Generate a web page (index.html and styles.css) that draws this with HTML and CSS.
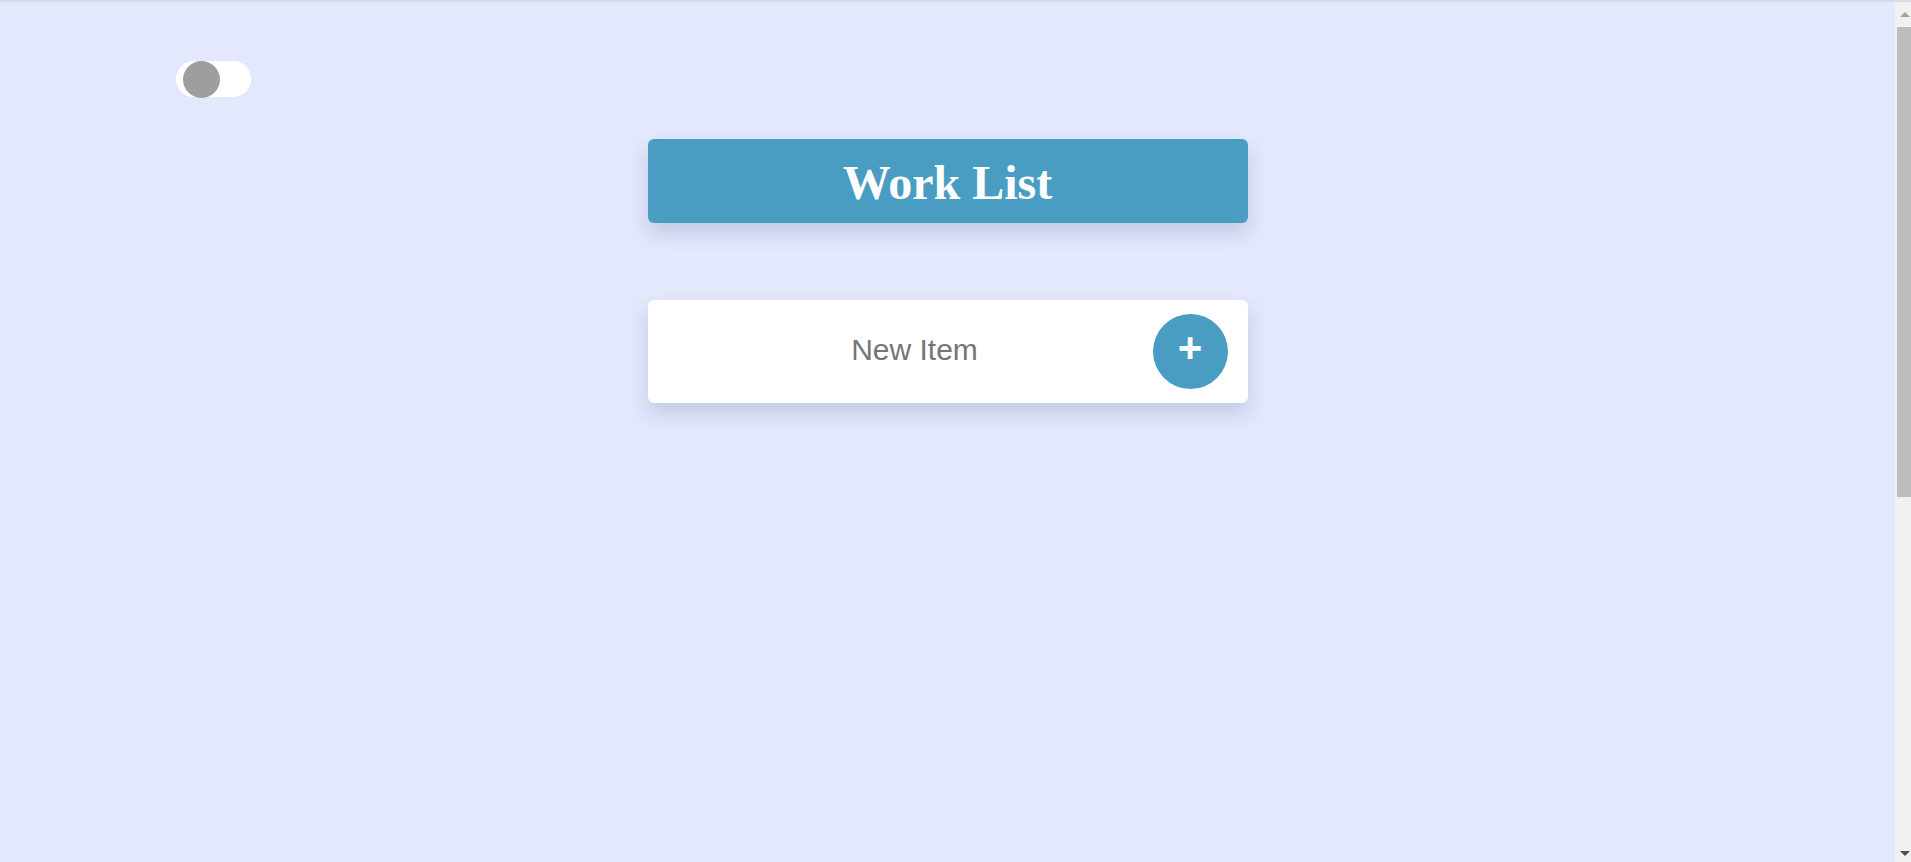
FILE: index.html
```html
<!DOCTYPE html>
<html lang="en">
<head>
<meta charset="utf-8">
<title>Work List</title>
<link rel="stylesheet" href="styles.css">
</head>
<body>
<div class="window">
  <div class="page">
    <div class="toggle-row">
      <label class="toggle"><span class="knob"></span></label>
    </div>
    <main class="container">
      <header class="title-box"><h1 class="title">Work List</h1></header>
      <form class="entry">
        <input class="entry-input" type="text" placeholder="New Item">
        <button class="add-btn" type="button">+</button>
      </form>
    </main>
  </div>
  <div class="scrollbar" aria-hidden="true">
    <div class="sb-btn sb-up"><span class="arrow-up"></span></div>
    <div class="sb-thumb"></div>
    <div class="sb-track"></div>
    <div class="sb-btn sb-down"><span class="arrow-down"></span></div>
  </div>
</div>
</body>
</html>
```
FILE: styles.css
```css
html, body {
  margin: 0;
  padding: 0;
  height: 100%;
  overflow: hidden;
}
body {
  background: #e3e8fc;
  border-top: 2px solid #d8dbe7;
  box-sizing: border-box;
  font-family: "Liberation Sans", Arial, sans-serif;
}
.window {
  display: flex;
  height: 100%;
}
.page {
  flex: 1;
  min-width: 0;
}
.scrollbar {
  width: 16px;
  flex: none;
  background: #f1f1f1;
  display: flex;
  flex-direction: column;
}
.sb-btn {
  display: flex;
  justify-content: flex-end;
  padding-right: 1px;
}
.sb-up {
  height: 25px;
  align-items: flex-start;
  padding-top: 10px;
  box-sizing: border-box;
}
.sb-down {
  height: 17px;
  align-items: flex-start;
  padding-top: 6px;
  box-sizing: border-box;
}
.arrow-up {
  width: 0;
  height: 0;
  border-left: 5px solid transparent;
  border-right: 5px solid transparent;
  border-bottom: 5px solid #a3a3a3;
}
.arrow-down {
  width: 0;
  height: 0;
  border-left: 5px solid transparent;
  border-right: 5px solid transparent;
  border-top: 5px solid #505050;
}
.sb-thumb {
  height: 470px;
  margin-left: 2px;
  background: #bdbdbd;
}
.sb-track {
  flex: 1;
}
.toggle-row {
  padding: 59px 0 0 176px;
}
.toggle {
  display: block;
  position: relative;
  width: 75px;
  height: 36px;
  border-radius: 18px;
  background: #ffffff;
}
.knob {
  position: absolute;
  left: 7px;
  top: -0.5px;
  width: 37px;
  height: 37px;
  border-radius: 50%;
  background: #9e9e9e;
}
.container {
  display: flex;
  flex-direction: column;
  align-items: center;
  padding-top: 42px;
}
.title-box {
  width: 600px;
  height: 84px;
  background: #4a9dc2;
  border-radius: 6px;
  box-shadow: 0 10px 20px rgba(40, 50, 110, 0.17);
  display: flex;
  align-items: center;
  justify-content: center;
}
.title {
  margin: 0;
  font-family: "Liberation Serif", "Times New Roman", serif;
  font-weight: bold;
  font-size: 48px;
  color: #ffffff;
  line-height: 1;
  padding-top: 3px;
}
.entry {
  margin-top: 77px;
  width: 600px;
  height: 103px;
  box-sizing: border-box;
  background: #ffffff;
  border-radius: 6px;
  box-shadow: 0 10px 20px rgba(40, 50, 110, 0.17);
  display: flex;
  align-items: center;
  padding: 0 20px 0 20px;
}
.entry-input {
  flex: 1;
  min-width: 0;
  border: none;
  outline: none;
  background: transparent;
  font-family: "Liberation Sans", Arial, sans-serif;
  font-size: 30px;
  color: #333;
  text-align: center;
  padding: 0 0 0 9px;
  margin-bottom: 4px;
}
.entry-input::placeholder {
  color: #757575;
}
.add-btn {
  width: 75px;
  height: 75px;
  flex: none;
  border: none;
  border-radius: 50%;
  background: #4a9dc2;
  color: #ffffff;
  font-family: "Liberation Sans", Arial, sans-serif;
  font-size: 42px;
  font-weight: bold;
  line-height: 1;
  padding: 0 0 8px 0;
  cursor: pointer;
}
```
